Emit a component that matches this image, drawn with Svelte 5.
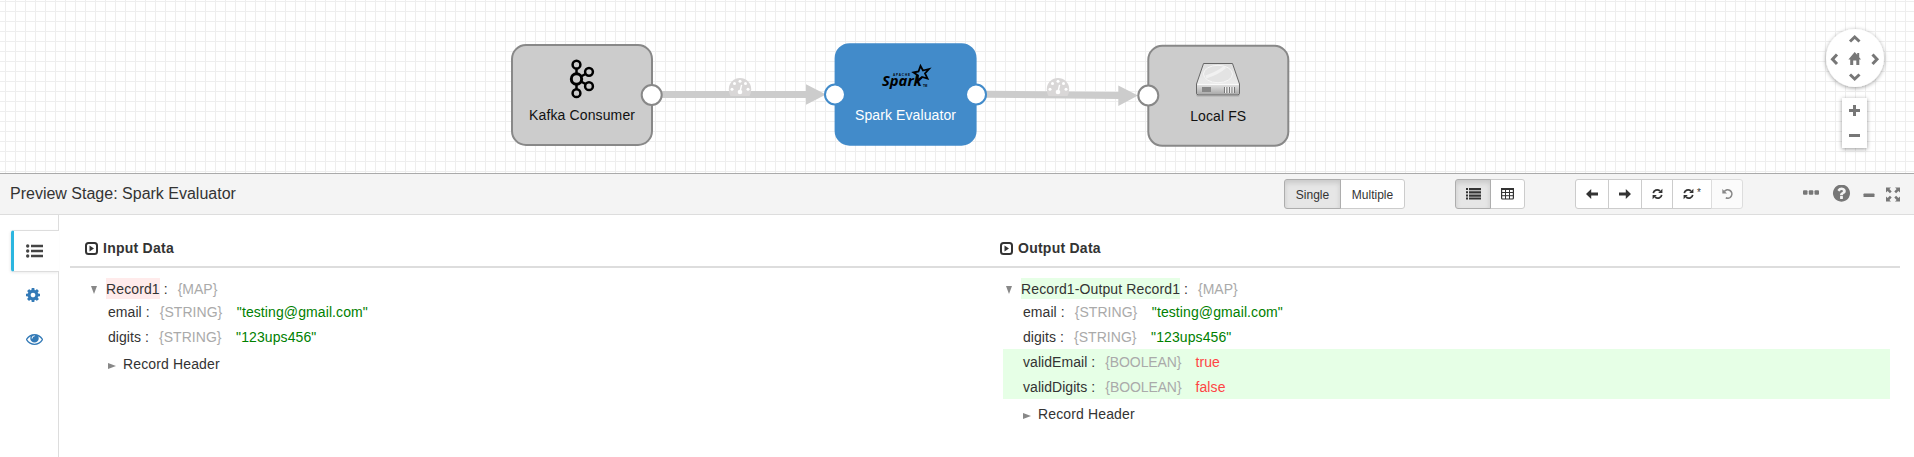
<script>
  const gear = "M1152 896q0-106-75-181t-181-75-181 75-75 181 75 181 181 75 181-75 75-181zm512-109v222q0 12-8 23t-20 13l-185 28q-19 54-39 91 35 50 107 138 10 12 10 25t-9 23q-27 37-99 108t-94 71q-12 0-26-9l-138-108q-44 23-91 38-16 136-29 186-7 28-36 28h-222q-14 0-24.5-8.5t-11.5-21.5l-28-184q-49-16-90-37l-141 107q-10 9-25 9-14 0-25-11-126-114-165-168-7-10-7-23 0-12 8-23 15-21 51-66.5t54-70.5q-27-50-41-99l-183-27q-13-2-21-12.5t-8-23.5v-222q0-12 8-23t19-13l186-28q14-46 39-92-40-57-107-138-10-12-10-24 0-10 9-23 26-36 98.5-107.5t94.5-71.5q13 0 26 10l138 107q44-23 91-38 16-136 29-186 7-28 36-28h222q14 0 24.5 8.5t11.5 21.5l28 184q49 16 90 37l142-107q9-9 24-9 13 0 25 10 129 119 165 170 7 8 7 22 0 12-8 23-15 21-51 66.5t-54 70.5q26 50 41 98l183 28q13 2 21 12.5t8 23.5z";
  const eye = "M1664 960q-152-236-381-353 61 104 61 225 0 185-131.5 316.5t-316.5 131.5-316.5-131.5-131.5-316.5q0-121 61-225-229 117-381 353 133 205 333.5 326.5t434.5 121.5 434.5-121.5 333.5-326.5zm-720-384q0-20-14-34t-34-14q-125 0-214.5 89.5t-89.5 214.5q0 20 14 34t34 14 34-14 14-34q0-86 61-147t147-61q20 0 34-14t14-34zm848 384q0 34-20 69-140 230-376.5 368.5t-499.5 138.5-499.5-139-376.5-368q-20-35-20-69t20-69q140-229 376.5-368t499.5-139 499.5 139 376.5 368q20 35 20 69z";
  const question = "M1024 1376v-192q0-14-9-23t-23-9h-192q-14 0-23 9t-9 23v192q0 14 9 23t23 9h192q14 0 23-9t9-23zm256-672q0-88-55.5-163t-138.5-116-170-41q-243 0-371 213-15 24 8 42l132 100q7 6 19 6 16 0 25-12 53-68 86-92 34-24 86-24 48 0 85.5 26t37.5 59q0 38-20 61t-68 45q-63 28-115.5 86.5t-52.5 125.5v36q0 14 9 23t23 9h192q14 0 23-9t9-23q0-19 21.5-49.5t54.5-49.5q32-18 49-28.5t46-35 44.5-48 28-60.5 12.5-81zm384 192q0 209-103 385.5t-279.5 279.5-385.5 103-385.5-103-279.5-279.5-103-385.5 103-385.5 279.5-279.5 385.5-103 385.5 103 279.5 279.5 103 385.5z";

  const base = [
    { name: "email", type: "STRING", value: '"testing@gmail.com"' },
    { name: "digits", type: "STRING", value: '"123ups456"' }
  ];
  const panes = [
    { title: "Input Data", record: "Record1", tint: "removed", fields: base },
    {
      title: "Output Data", record: "Record1-Output Record1", tint: "added",
      fields: [
        ...base,
        { name: "validEmail", type: "BOOLEAN", value: "true", added: true },
        { name: "validDigits", type: "BOOLEAN", value: "false", added: true }
      ]
    }
  ];
</script>

{#snippet refresh()}
  <svg width="11" height="12" viewBox="0 0 11 12" fill="none" stroke="#333" stroke-width="1.7">
    <path d="M1.3 5.2C1.6 2.4 5.2 .6 8 3M9.7 6.8C9.4 9.6 5.8 11.4 3 9" />
    <path d="M10.4.8V5H6.2zM.6 11.2V7h4.2z" fill="#333" stroke="none" />
  </svg>
{/snippet}

{#snippet gauge(x, y)}
  <g transform="translate({x} {y})">
    <path d="M-9.5 18Q-11.2 15-11.2 11.2A11.2 11.2 0 0 1 11.2 11.2Q11.2 15 9.5 18Z" fill="#d9d7d7" />
    <g fill="#fff">
      <circle cx="-8" cy="11.3" r="1.5" /><circle cx="-5.5" cy="5.6" r="1.5" /><circle cx="0" cy="3.2" r="1.5" />
      <circle cx="5.5" cy="5.6" r="1.5" /><circle cx="8" cy="11.3" r="1.5" />
      <circle cx="0" cy="14" r="2.3" />
    </g>
    <path d="M.2 13L1.6 6.8" stroke="#fff" stroke-width="1.4" />
  </g>
{/snippet}

<main>
  <section class="canvas">
    <svg class="graph" width="1914" height="173">
      <defs>
        <pattern id="grid" width="10" height="10" x="5" y="1" patternUnits="userSpaceOnUse">
          <path d="M.5 0V10M0 .5H10" stroke="#eee" />
        </pattern>
        <linearGradient id="lid" x2="0" y2="1"><stop stop-color="#dedede" /><stop offset="1" stop-color="#f3f3f3" /></linearGradient>
        <linearGradient id="front" x2="0" y2="1"><stop stop-color="#e2e2e2" /><stop offset="1" stop-color="#aaa" /></linearGradient>
        <filter id="shade" x="-30%" y="-30%" width="160%" height="160%"><feDropShadow dx="0" dy="1" stdDeviation="2" flood-opacity=".4" /></filter>
      </defs>
      <rect width="1914" height="173" fill="#fff" />
      <rect width="1914" height="173" fill="url(#grid)" />

      <g stroke="#ccc" stroke-width="7"><path d="M662 94.5H807" /><path d="M986 94.3L1119 95.6" /></g>
      <path d="M806 84.3V104.7L826 94.5ZM1118.3 85.5V106L1138 95.6Z" fill="#ccc" />
      {@render gauge(740, 78)}
      {@render gauge(1058, 78)}

      <g stroke-width="2">
        <rect x="512" y="45" width="140" height="100" rx="14" fill="#ccc" stroke="#888" />
        <circle cx="651.7" cy="95" r="10" fill="#fff" stroke="#888" />
        <rect x="835.6" y="44.2" width="140" height="100.5" rx="14" fill="#428bca" stroke="#428bca" />
        <circle cx="835" cy="94.5" r="10" fill="#fff" stroke="#428bca" />
        <circle cx="976" cy="94.5" r="10" fill="#fff" stroke="#428bca" />
        <rect x="1148.3" y="45.8" width="140" height="100" rx="14" fill="#ccc" stroke="#888" />
        <circle cx="1148.3" cy="95.5" r="10" fill="#fff" stroke="#888" />
      </g>

      <g fill="none" stroke="#000" stroke-width="2.5">
        <path d="M576.5 68.5V74M576.5 84V89M581 76.5L585.5 74M581 81.5L585.5 84" />
        <circle cx="576.5" cy="64.7" r="3.9" /><circle cx="576.5" cy="79" r="5.2" stroke-width="3" />
        <circle cx="576.5" cy="93.2" r="3.9" /><circle cx="589" cy="71.8" r="3.9" /><circle cx="589" cy="86.2" r="3.9" />
      </g>

      <text class="spark" x="882" y="86" textLength="40" lengthAdjust="spacingAndGlyphs">Spark</text>
      <text class="apache" x="893" y="75.5" textLength="17">APACHE</text>
      <text class="apache" x="923" y="86.5">TM</text>
      <path d="M913.5 72.5L918.5 71.5 920.5 66 923 70.5 929 69 925 73.5 927.5 78.5 922 77 917.5 80.5 918 75.5Z" fill="none" stroke="#000" stroke-width="1.8" />

      <g>
        <rect x="1196.5" y="94" width="43" height="2.5" rx="1" fill="#aaa" />
        <path d="M1203.5 63.5H1232.5L1239.5 84V93Q1239.5 94.7 1238 94.7H1198Q1196.5 94.7 1196.5 93V84Z" fill="url(#lid)" stroke="#666" />
        <path d="M1197 84.5H1239V93Q1239 94.2 1238 94.2H1198Q1197 94.2 1197 93Z" fill="url(#front)" />
        <ellipse cx="1218" cy="74" rx="14.5" ry="8.7" fill="#e3e3e3" stroke="#f6f6f6" />
        <path d="M1206 77Q1218 73 1225 67" stroke="#f1f1f1" stroke-width="3" fill="none" />
        <path d="M1197.5 84.5H1238.5" stroke="#fafafa" />
        <rect x="1202" y="87" width="9" height="5" fill="#888" />
        <path d="M1224.5 87v6M1227 87v6M1229.5 87v6M1232 87v6M1234.5 87v6" stroke="#777" />
        <path d="M1225.5 87v6M1228.2 87v6M1230.7 87v6M1233.2 87v6" stroke="#f2f2f2" />
      </g>

      <g class="label" text-anchor="middle">
        <text x="582" y="119.8" textLength="106">Kafka Consumer</text>
        <text x="905.5" y="119.8" textLength="101" fill="#fff">Spark Evaluator</text>
        <text x="1218.2" y="120.8" textLength="56">Local FS</text>
      </g>

      <circle cx="1855" cy="58" r="29" fill="#fff" filter="url(#shade)" />
      <rect x="1842" y="98" width="25" height="50" fill="#fff" filter="url(#shade)" />
      <g fill="none" stroke="#777" stroke-width="3">
        <path d="M1850 41.5L1854.7 37 1859.5 41.5M1850 74.5L1854.7 79 1859.5 74.5M1837 54.5L1832.5 59.2 1837 64M1872.5 54.5L1877 59.2 1872.5 64" />
        <path d="M1849 110.5H1860M1854.5 105V116M1849 135.5H1860" />
      </g>
      <path d="M1848.4 59.5L1854.7 52 1857.2 54.8V53H1859.2V57.2L1861 59.5H1859.3V65H1856.3V60.5H1853.2V65H1850.2V59.5Z" fill="#777" />
    </svg>
  </section>

  <header>
    <h1>Preview Stage: Spark Evaluator</h1>
    <div class="group modes"><span class="btn on" style:width="57px">Single</span><span class="btn" style:width="65px">Multiple</span></div>
    <div class="group views">
      <span class="btn on" style:width="36px">
        <svg width="15" height="12" fill="#333"><path d="M0 0h2v2H0zM3 0h12v2.3H3zM0 3.2h2v2H0zM3 3.2h12v2.3H3zM0 6.4h2v2H0zM3 6.4h12v2.3H3zM0 9.6h2v2H0zM3 9.6h12v2H3z" /></svg>
      </span>
      <span class="btn" style:width="35px">
        <svg width="13" height="12" fill="none" stroke="#333"><rect x=".6" y="1" width="11.8" height="10" rx="1" stroke-width="1.2" /><path d="M0 1h13" stroke-width="2" /><path d="M4.5 1v10M8.5 1v10M1 4.5h11M1 7.7h11" /></svg>
      </span>
    </div>
    <div class="group steps">
      <span class="btn" style:width="34px"><svg width="12" height="10"><path d="M0 5L5.2 0V3.4H12V6.6H5.2V10Z" fill="#333" /></svg></span>
      <span class="btn" style:width="34px"><svg width="12" height="10"><path d="M12 5L6.8 0V3.4H0V6.6H6.8V10Z" fill="#333" /></svg></span>
      <span class="btn" style:width="32px">{@render refresh()}</span>
      <span class="btn" style:width="40px">{@render refresh()}<sup>*</sup></span>
      <span class="btn off" style:width="32px"><svg width="11" height="12" fill="none" stroke="#888" stroke-width="1.6"><path d="M2.3 3.5A4.2 4.2 0 1 1 3.8 9.8" /><path d="M.3 1v4.5H5z" fill="#888" stroke="none" /></svg></span>
    </div>
    <div class="tools">
      <svg width="98" height="18" viewBox="0 0 98 18" fill="#777">
        <rect x="0" y="5.2" width="4.5" height="4.5" rx="1" /><rect x="5.8" y="5.2" width="4.5" height="4.5" rx="1" /><rect x="11.5" y="5.2" width="4.5" height="4.5" rx="1" />
        <path transform="translate(28.5 -1.8) scale(.01115)" d={question} />
        <rect x="60.5" y="8.5" width="11" height="3.6" rx=".7" />
        <path d="M83 2.5h5L86.4 4.1 88.7 6.4 86.9 8.2 84.6 5.9 83 7.5zM97 2.5v5L95.4 5.9 93.1 8.2 91.3 6.4 93.6 4.1 92 2.5zM83 16.5v-5L84.6 13.1 86.9 10.8 88.7 12.6 86.4 14.9 88 16.5zM97 16.5h-5L93.6 14.9 91.3 12.6 93.1 10.8 95.4 13.1 97 11.5z" />
      </svg>
    </div>
  </header>

  <div class="body">
    <nav>
      <div class="lead"></div>
      <div class="tab active"><svg width="17" height="14" fill="#444"><circle cx="1.7" cy="2" r="1.7" /><circle cx="1.7" cy="7" r="1.7" /><circle cx="1.7" cy="12" r="1.7" /><path d="M5 .8h12v2.5H5zM5 5.8h12v2.5H5zM5 10.7h12v2.5H5z" /></svg></div>
      <div class="tab"><svg width="14" height="14" viewBox="128 128 1536 1536"><path d={gear} fill="#337ab7" /></svg></div>
      <div class="tab"><svg width="17" height="17" viewBox="0 64 1792 1792"><path d={eye} fill="#337ab7" /></svg></div>
      <div class="rest"></div>
    </nav>
    <div class="panes">
      {#each panes as pane}
        <section class="pane">
          <h2>
            <svg width="13" height="13" fill="none" stroke="#333"><rect x="1" y="1" width="11" height="11" rx="2.5" stroke-width="2" /><path d="M4.5 3.5V9.5L9 6.5Z" fill="#333" stroke="none" /></svg>
            {pane.title}
          </h2>
          <div class="record">
            <svg class="down" width="6" height="8"><path d="M0 0H6L3 8Z" fill="#888" /></svg>
            <span class={pane.tint}>{pane.record}</span><b>:</b><i>{`{MAP}`}</i>
          </div>
          {#each pane.fields as field}
            <div class="field" class:new={field.added}>
              <span>{field.name}</span><b>:</b><i>{`{${field.type}}`}</i><em>{field.value}</em>
            </div>
          {/each}
          <div class="meta"><svg width="8" height="6"><path d="M0 0V6L8 3Z" fill="#888" /></svg>Record Header</div>
        </section>
      {/each}
    </div>
  </div>
</main>

<style>
  :global(body) { margin: 0; }
  main { width: 1914px; height: 457px; overflow: hidden; display: flex; flex-direction: column; background: #fff; color: #333; font: 14px/20px "Liberation Sans", Arial, sans-serif; }
  svg { display: block; flex: none; }
  .canvas { height: 173px; }
  .label { font-size: 14px; fill: #111; }
  .label text[fill] { fill: #fff; }
  .spark { font: italic bold 14.5px "Open Sans", sans-serif; fill: #000; }
  .apache { font: bold 3px "Liberation Sans", sans-serif; fill: #000; }
  header { height: 42px; box-sizing: border-box; border-top: 1px solid #aaa; border-bottom: 1px solid #ddd; background: #f4f4f4; display: flex; align-items: center; flex: none; }
  h1 { width: 1274px; padding-left: 10px; margin: 0; font-size: 16px; font-weight: 400; line-height: 20px; box-sizing: border-box; margin-right: 10px; }
  .group { display: flex; height: 30px; }
  .views { margin-left: 50px; }
  .steps { margin-left: 50px; }
  .tools { margin-left: 60px; }
  .btn { box-sizing: border-box; border: 1px solid #ccc; background: #fff; height: 30px; display: flex; align-items: center; justify-content: center; font-size: 12px; }
  .btn + .btn { margin-left: -1px; }
  .btn:first-child { border-radius: 3px 0 0 3px; }
  .btn:last-child { border-radius: 0 3px 3px 0; }
  .modes .btn { line-height: 18px; padding-top: 2px; }
  .on { background: #e6e6e6; border-color: #adadad; box-shadow: inset 0 3px 5px rgba(0, 0, 0, .125); z-index: 1; }
  .off { background: #fbfbfb; border-color: #ddd; }
  sup { font-size: 10px; line-height: 10px; height: 12px; margin-left: 3px; vertical-align: baseline; }
  .body { flex: 1; display: flex; }
  nav { width: 59px; display: flex; flex-direction: column; padding-left: 11px; box-sizing: border-box; }
  .lead { height: 15px; border-right: 1px solid #ddd; }
  .tab { height: 45px; display: flex; align-items: center; padding-left: 15px; border-right: 1px solid #ddd; box-sizing: border-box; }
  .tab.active { height: 42px; border: 1px solid #ddd; border-left: 3px solid #2cb6e0; border-right: 0; border-radius: 3px 0 0 3px; padding-left: 12px; box-shadow: -1px 1px 3px rgba(0, 0, 0, .08); }
  .rest { flex: 1; border-right: 1px solid #ddd; }
  .panes { display: flex; padding-left: 11px; width: 1830px; }
  .pane { width: 915px; padding: 0; }
  h2 { height: 36px; margin: 0; padding: 15px 0 0 15px; border-bottom: 2px solid #ddd; display: flex; align-items: center; gap: 5px; font-size: 14px; line-height: 20px; font-weight: 700; letter-spacing: .25px; }
  .record { height: 21px; margin-top: 10px; display: flex; align-items: center; padding-left: 21px; line-height: 20px; }
  .down { margin: 2px 9px 0 0; }
  .record span { line-height: 20px; padding-top: 1px; letter-spacing: .12px; }
  .removed { background: #ffebeb; }
  .added { background: #e6ffe6; }
  b { font-weight: 400; margin-left: 4px; }
  .record b, .record i { padding-top: 1px; }
  i { font-style: normal; color: #aaa; margin-left: 10px; }
  em { font-style: normal; color: #008000; margin-left: 14.5px; letter-spacing: .1px; }
  .field { height: 25px; box-sizing: border-box; padding-top: 1px; display: flex; align-items: center; padding-left: 20px; margin: 0 10px 0 18px; line-height: 24px; letter-spacing: .05px; }
  .new { background: #e6ffe6; }
  .new i { letter-spacing: -.1px; }
  .new em { color: #f44; margin-left: 14px; }
  .meta { display: flex; align-items: center; height: 29px; padding-left: 38px; gap: 7px; letter-spacing: .14px; }
  .meta svg { margin-top: 4px; }
</style>
